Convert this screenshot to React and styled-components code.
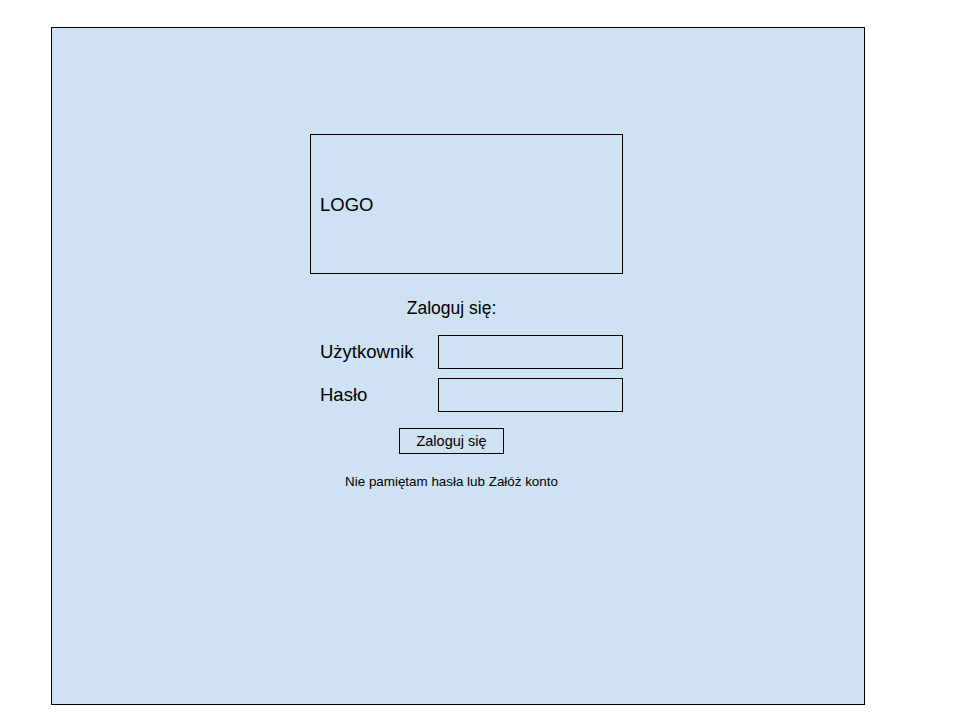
import React from 'react';
import styled, { createGlobalStyle } from 'styled-components';

const GlobalStyle = createGlobalStyle`
  body {
    margin: 0;
    background: #ffffff;
    font-family: "Liberation Sans", Arial, sans-serif;
    color: #000000;
  }
`

const Panel = styled.div`
  box-sizing: border-box;
  margin: 27px 0 0 51px;
  width: 814px;
  height: 678px;
  background: #cfe2f3;
  border: 1px solid #000000;
  padding: 106px 0 0 258px;
`

const Column = styled.div`
  width: 313px;
  display: flex;
  flex-direction: column;
`

const LogoBox = styled.div`
  box-sizing: border-box;
  height: 140px;
  border: 1px solid #000000;
  display: flex;
  align-items: center;
  padding: 1px 0 0 9px;
  font-size: 18.5px;
`

const Centered = styled.div`
  width: 283px;
  text-align: center;
  margin-top: ${props => props.gap}px;
`

const Title = styled.div`
  font-size: 17.5px;
  line-height: 20px;
`

const Fields = styled.div`
  margin-top: 17px;
  display: grid;
  grid-template-columns: 128px 185px;
  row-gap: 9px;
`

const Label = styled.label`
  padding: 0 0 1px 10px;
  font-size: 18.5px;
  display: flex;
  align-items: center;
`

const Input = styled.input`
  box-sizing: border-box;
  width: 185px;
  height: 34px;
  margin: 0;
  border: 1px solid #000000;
  background: transparent;
  font-family: inherit;
  font-size: 16px;
  outline: none;
`

const Button = styled.button`
  box-sizing: border-box;
  width: 105px;
  height: 26px;
  border: 1px solid #000000;
  background: transparent;
  font-family: "Liberation Sans", Arial, sans-serif;
  font-size: 14.5px;
  color: #000000;
  padding: 0;
  cursor: pointer;
`

const Help = styled.div`
  font-size: 13.4px;
  line-height: 15px;
`

const App = () => (
  <>
    <GlobalStyle />
    <Panel>
      <Column>
        <LogoBox>LOGO</LogoBox>
        <Centered gap={24}>
          <Title>Zaloguj się:</Title>
        </Centered>
        <Fields>
          <Label htmlFor="user">Użytkownik</Label>
          <Input id="user" type="text" />
          <Label htmlFor="pass">Hasło</Label>
          <Input id="pass" type="password" />
        </Fields>
        <Centered gap={16}>
          <Button>Zaloguj się</Button>
        </Centered>
        <Centered gap={20}>
          <Help>Nie pamiętam hasła lub Załóż konto</Help>
        </Centered>
      </Column>
    </Panel>
  </>
)

export default App;
